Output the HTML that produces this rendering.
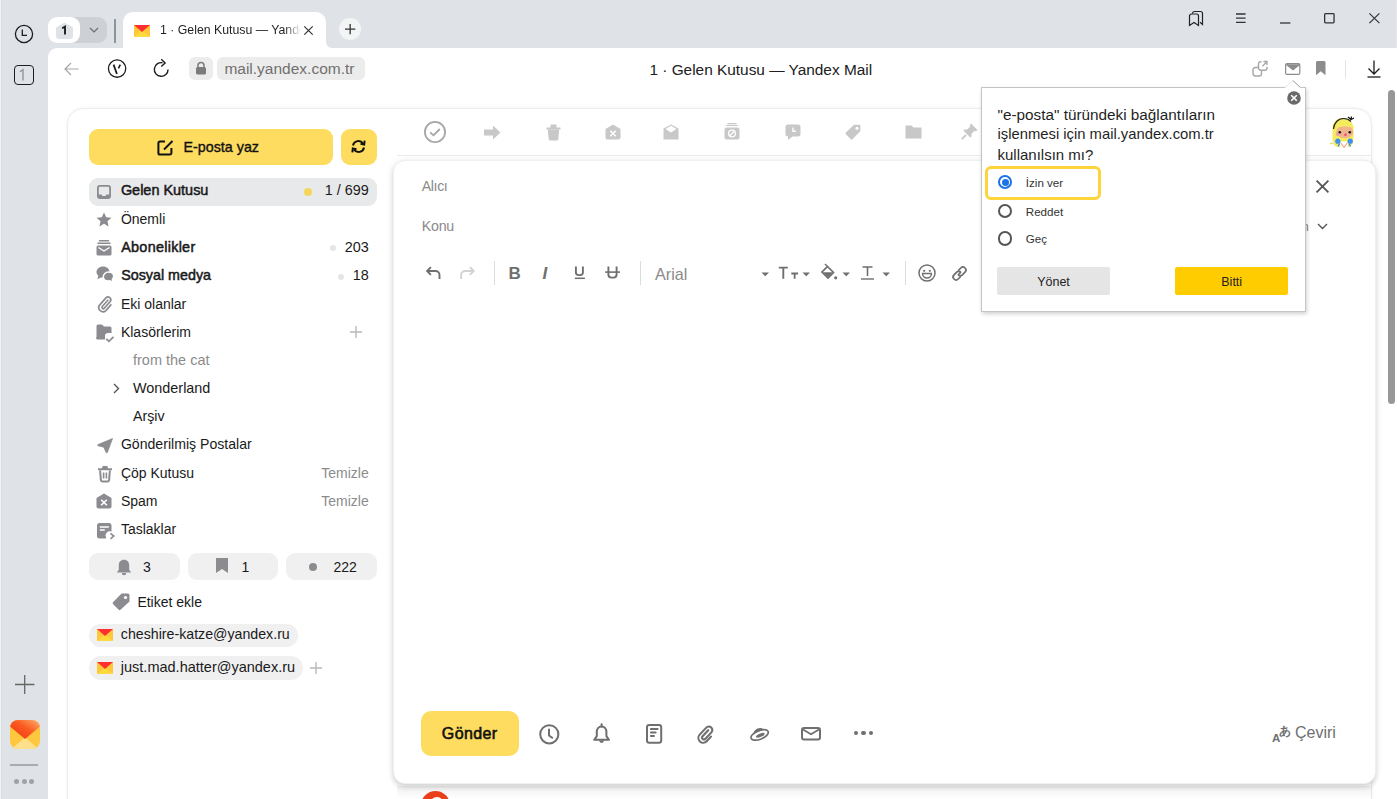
<!DOCTYPE html>
<html><head><meta charset="utf-8">
<style>
*{box-sizing:border-box;margin:0;padding:0}
html,body{width:1397px;height:799px;overflow:hidden;background:#dfe2e7;font-family:"Liberation Sans",sans-serif;color:#000;position:relative}
.a{position:absolute}
svg{position:absolute;overflow:visible}
.t{position:absolute;white-space:nowrap;line-height:1}
</style></head><body>
<div class="a" style="left:0px;top:0px;width:1px;height:799px;background:#f1f3f6;border-radius:0px;"></div>
<div class="a" style="left:1px;top:0px;width:1px;height:799px;background:#d9dce1;border-radius:0px;"></div>
<div class="a" style="left:1396px;top:0px;width:1px;height:48px;background:#e6e8ec;border-radius:0px;"></div>
<svg style="left:14px;top:24px;" width="20" height="20" viewBox="0 0 20 20"><circle cx="10" cy="10" r="8.6" fill="none" stroke="#1d1d1f" stroke-width="1.3"/><path d="M8.3 5.6V11.3H13" fill="none" stroke="#1d1d1f" stroke-width="1.3"/></svg>
<div class="a" style="left:14px;top:65px;width:20px;height:20px;background:transparent;border-radius:4px;border:1.3px solid #1d1d1f"></div>
<svg style="left:18px;top:69px;" width="8" height="12" viewBox="0 0 8 12"><path d="M2 2.8L5 0.8V11.5" fill="none" stroke="#8f8f8f" stroke-width="1.3"/></svg>
<div class="a" style="left:48px;top:17px;width:59px;height:26px;background:#cdd0d5;border-radius:9px;"></div>
<div class="a" style="left:48px;top:17px;width:32px;height:26px;background:#fff;border-radius:9px;"></div>
<svg style="left:56px;top:22px;" width="17" height="17" viewBox="0 0 17 17"><path d="M0 5.5L8.5 0.5L17 5.5V14a3 3 0 0 1-3 3H3a3 3 0 0 1-3-3z" fill="#dfe2e7"/></svg>
<svg style="left:60.5px;top:26px;" width="8" height="10" viewBox="0 0 8 10"><path d="M1.2 2.2L4 0.6V8.4" fill="none" stroke="#1d1d1f" stroke-width="1.9"/></svg>
<svg style="left:89px;top:26px;" width="10" height="8" viewBox="0 0 10 8"><path d="M1 2L5 6L9 2" fill="none" stroke="#6b6e73" stroke-width="1.2"/></svg>
<div class="a" style="left:114.2px;top:18.5px;width:1.6px;height:24.3px;background:#909398;border-radius:0px;"></div>
<div class="a" style="left:123px;top:12px;width:203px;height:40px;background:#fff;border-radius:10px 10px 0 0"></div>
<svg style="left:326px;top:42px;" width="6" height="6" viewBox="0 0 6 6"><path d="M0 0V6H6A6 6 0 0 1 0 0z" fill="#fff"/></svg>
<svg style="left:134.2px;top:24.9px;" width="16" height="11.7" viewBox="0 0 16 11.7"><path d="M0 0H16V11.7H0z" fill="#fdc93a"/><path d="M0 11.7L8 5.5L16 11.7z" fill="#ffd83a"/><path d="M0 0H16L8 7z" fill="#ff2f2f"/></svg>
<div class="t" style="left:160px;top:24.4px;font-size:12.3px;color:#1f1f1f;width:141px;overflow:hidden;-webkit-mask-image:linear-gradient(90deg,#000 88%,transparent 100%)">1 · Gelen Kutusu — Yandex Mail</div>
<svg style="left:304px;top:26px;" width="9" height="9" viewBox="0 0 9 9"><path d="M0.3 0.3L8.7 8.7M8.7 0.3L0.3 8.7" stroke="#333" stroke-width="1.2"/></svg>
<div class="a" style="left:338.8px;top:18.3px;width:22px;height:22px;border-radius:50%;background:#f3f4f6"></div>
<svg style="left:344.8px;top:24.3px;" width="10.3" height="10.3" viewBox="0 0 10.3 10.3"><path d="M5.15 0V10.3M0 5.15H10.3" stroke="#333" stroke-width="1.3"/></svg>
<svg style="left:1188px;top:10px;" width="16" height="16" viewBox="0 0 16 16"><path d="M4.5 3.5a2 2 0 0 1 2-2h6a2 2 0 0 1 2 2v11l-2.5-2.2" fill="none" stroke="#222" stroke-width="1.2"/><path d="M1.5 6a2 2 0 0 1 2-2h5a2 2 0 0 1 2 2v9.5L6 12.5 1.5 15.5z" fill="none" stroke="#222" stroke-width="1.2"/></svg>
<svg style="left:1236px;top:13px;" width="10" height="10" viewBox="0 0 10 10"><path d="M0 1H9.6M0 5.2H9.6M0 9.4H9.6" stroke="#333" stroke-width="1.3"/></svg>
<svg style="left:1280.2px;top:21.5px;" width="11" height="2" viewBox="0 0 11 2"><path d="M0 1H10.4" stroke="#333" stroke-width="1.3"/></svg>
<svg style="left:1324.1px;top:12.8px;" width="11" height="11" viewBox="0 0 11 11"><rect x="0.65" y="0.65" width="9.4" height="9.2" rx="0.8" fill="none" stroke="#333" stroke-width="1.3"/></svg>
<svg style="left:1368.7px;top:12.8px;" width="11" height="11" viewBox="0 0 11 11"><path d="M0.4 0.4L10.4 10.1M10.4 0.4L0.4 10.1" stroke="#333" stroke-width="1.2"/></svg>
<div class="a" style="left:48px;top:48px;width:1349px;height:751px;background:#fff;border-radius:9px 0 0 0"></div>
<svg style="left:64px;top:62px;" width="15" height="14" viewBox="0 0 15 14"><path d="M14.5 7H1.2M7 1L1 7L7 13" fill="none" stroke="#a6a6a6" stroke-width="1.2"/></svg>
<svg style="left:107px;top:59px;" width="20" height="20" viewBox="0 0 20 20"><circle cx="10.1" cy="9.6" r="8.65" fill="none" stroke="#1d1d1f" stroke-width="1.3"/><path d="M6.6 5.6L9.9 15" fill="none" stroke="#1d1d1f" stroke-width="1.8"/><path d="M13.3 5.6L11.4 9.3" fill="none" stroke="#1d1d1f" stroke-width="1.6"/></svg>
<svg style="left:152px;top:60px;" width="18" height="18" viewBox="0 0 18 18"><path d="M10.5 2.75A6.85 6.85 0 1 0 16.05 9.5" fill="none" stroke="#1d1d1f" stroke-width="1.4"/><path d="M9.3 -0.8L13.1 2.9L9.3 6.4" fill="none" stroke="#1d1d1f" stroke-width="1.4"/></svg>
<div class="a" style="left:189px;top:56.5px;width:24px;height:23.5px;background:#ececec;border-radius:6px;"></div>
<svg style="left:195px;top:61px;" width="12" height="14" viewBox="0 0 12 14"><path d="M3 6.5V4.5a3 3 0 0 1 6 0v2" fill="none" stroke="#7b7b7b" stroke-width="1.5"/><rect x="1" y="6" width="10" height="7.5" rx="1.5" fill="#7b7b7b"/></svg>
<div class="a" style="left:216.5px;top:56.5px;width:148px;height:23.5px;background:#ececec;border-radius:6px;"></div>
<div class="t" style="left:224.4px;top:61.38px;font-size:15.5px;color:#707070;">mail.yandex.com.tr</div>
<div class="t" style="left:649.4px;top:61.76px;font-size:15.4px;color:#202020;">1 · Gelen Kutusu — Yandex Mail</div>
<svg style="left:1252px;top:60px;" width="16" height="16" viewBox="0 0 16 16"><path d="M6 7.5H3.2A2.2 2.2 0 0 0 1 9.7v4.1A2.2 2.2 0 0 0 3.2 16h4.1a2.2 2.2 0 0 0 2.2-2.2V10" fill="none" stroke="#a6a6a6" stroke-width="1.4"/><path d="M9.5 1.7H8.7A2.2 2.2 0 0 0 6.5 3.9v4.1a2.2 2.2 0 0 0 2.2 2.2h4.1A2.2 2.2 0 0 0 15 8V6.8" fill="none" stroke="#a6a6a6" stroke-width="1.4"/><path d="M10.5 6.2L14.8 1.7M11.5 1.5H15V5" fill="none" stroke="#a6a6a6" stroke-width="1.3"/></svg>
<svg style="left:1284.5px;top:62.5px;" width="16" height="12" viewBox="0 0 16 12"><rect x="0.6" y="0.6" width="14.2" height="10.8" rx="1.5" fill="none" stroke="#8c8c8c" stroke-width="1.2"/><path d="M1.2 1.2L8 6.6L14.8 1.2z" fill="#8c8c8c"/><path d="M1.2 1.2L8 6.6L14.8 1.2" fill="none" stroke="#8c8c8c" stroke-width="1.4"/></svg>
<svg style="left:1315.8px;top:61px;" width="9.5" height="14.3" viewBox="0 0 9.5 14.3"><path d="M0 1.5A1.5 1.5 0 0 1 1.5 0H8A1.5 1.5 0 0 1 9.5 1.5V14.3L4.75 10.3L0 14.3z" fill="#8c8c8c"/></svg>
<div class="a" style="left:1344.5px;top:60px;width:1px;height:18px;background:#e5e5e5;border-radius:0px;"></div>
<svg style="left:1366px;top:60px;" width="16" height="18" viewBox="0 0 16 18"><path d="M8 0.5V14M2.5 8.5L8 14L13.5 8.5" fill="none" stroke="#1d1d1f" stroke-width="1.3"/><path d="M1.5 17H14.5" stroke="#1d1d1f" stroke-width="1.3"/></svg>
<div class="a" style="left:1387.5px;top:90px;width:7.7px;height:314px;background:#979797;border-radius:4px;"></div>
<div class="a" style="left:67px;top:108px;width:1305px;height:720px;border:1px solid #ececec;border-radius:16px;box-shadow:0 0 3px rgba(0,0,0,0.06)"></div>
<div class="a" style="left:88.5px;top:129px;width:244px;height:36px;background:#fddc60;border-radius:9px;"></div>
<svg style="left:157px;top:139px;" width="18" height="17" viewBox="0 0 18 17"><path d="M8 2.5H3a1.6 1.6 0 0 0-1.6 1.6V14a1.6 1.6 0 0 0 1.6 1.6h9.8A1.6 1.6 0 0 0 14.4 14V9" fill="none" stroke="#111" stroke-width="2"/><path d="M7 10.5L15.5 2" fill="none" stroke="#111" stroke-width="2"/></svg>
<div class="t" style="left:183.5px;top:140.20px;font-size:14.3px;color:#111;-webkit-text-stroke:0.35px #111">E-posta yaz</div>
<div class="a" style="left:341px;top:129px;width:36px;height:36px;background:#fddc60;border-radius:9px;"></div>
<svg style="left:350px;top:138px;" width="17" height="17" viewBox="0 0 17 17"><path d="M3 7.5A5.5 5.5 0 0 1 13 5.5M14 9.5A5.5 5.5 0 0 1 4 11.5" fill="none" stroke="#111" stroke-width="2"/><path d="M10.5 5.8L14.2 6.5L14.6 2.6M6.5 11.2L2.8 10.5L2.4 14.4" fill="none" stroke="#111" stroke-width="2"/></svg>
<div class="a" style="left:88.5px;top:177.5px;width:288.5px;height:28px;background:#e8e9eb;border-radius:9px;"></div>
<svg style="left:97px;top:185px;" width="14" height="14" viewBox="0 0 14 14"><rect x="0.9" y="0.9" width="12.2" height="12.2" rx="2" fill="none" stroke="#8c8c90" stroke-width="1.8"/><path d="M1 9.5H4.5L5.5 11H8.5L9.5 9.5H13V13H1z" fill="#8c8c90"/></svg>
<div class="t" style="left:120.9px;top:183.37px;font-size:14.45px;color:#1a1a1a;-webkit-text-stroke:0.5px #1a1a1a">Gelen Kutusu</div>
<div class="a" style="left:303.8px;top:187.8px;width:8px;height:8px;border-radius:50%;background:#f6d65a"></div>
<div class="t" style="right:1028.3px;top:183.41px;font-size:14.4px;color:#1a1a1a;">1 / 699</div>
<svg style="left:96px;top:212px;" width="16" height="15" viewBox="0 0 16 15"><path d="M8 0.5L10.2 5.3L15.4 5.8L11.5 9.3L12.6 14.4L8 11.8L3.4 14.4L4.5 9.3L0.6 5.8L5.8 5.3z" fill="#8c8c90"/></svg>
<div class="t" style="left:120.9px;top:211.95px;font-size:14px;color:#1a1a1a;">Önemli</div>
<svg style="left:96px;top:240px;" width="16" height="16" viewBox="0 0 16 16"><path d="M3.5 0.8H12.5M2 3.3H14" stroke="#8c8c90" stroke-width="1.5" stroke-linecap="round"/><path d="M0.5 7A1.5 1.5 0 0 1 2 5.5H14A1.5 1.5 0 0 1 15.5 7V14a1.5 1.5 0 0 1-1.5 1.5H2A1.5 1.5 0 0 1 0.5 14z" fill="#8c8c90"/><path d="M2.5 7.5L8 11L13.5 7.5" fill="none" stroke="#fff" stroke-width="1.3"/></svg>
<div class="t" style="left:121.2px;top:240.11px;font-size:14.4px;color:#1a1a1a;-webkit-text-stroke:0.5px #1a1a1a;letter-spacing:0.28px">Abonelikler</div>
<div class="a" style="left:330.4px;top:245px;width:6px;height:6px;border-radius:50%;background:#e6e6e8"></div>
<div class="t" style="right:1028.3px;top:239.81px;font-size:14.4px;color:#1a1a1a;">203</div>
<svg style="left:96px;top:266px;" width="19" height="18" viewBox="0 0 19 18"><path d="M7 0.5C3.3 0.5 0.5 3 0.5 6c0 1.5.7 2.8 1.8 3.8L1.4 13.3 5 11.4c.6.1 1.3.2 2 .2 3.7 0 6.5-2.5 6.5-5.6S10.7.5 7 .5z" fill="#8c8c90"/><path d="M12.5 6c2.9 0 5.2 1.9 5.2 4.3 0 1.1-.5 2.1-1.3 2.9l.6 3.2-3-1.6c-.5.1-1 .2-1.5.2-2.9 0-5.2-1.9-5.2-4.3S9.6 6 12.5 6z" fill="#8c8c90" stroke="#fff" stroke-width="1.5"/></svg>
<div class="t" style="left:121.2px;top:268.40px;font-size:14.3px;color:#1a1a1a;-webkit-text-stroke:0.5px #1a1a1a">Sosyal medya</div>
<div class="a" style="left:337.8px;top:273.5px;width:6px;height:6px;border-radius:50%;background:#e6e6e8"></div>
<div class="t" style="right:1028.3px;top:268.01px;font-size:14.4px;color:#1a1a1a;">18</div>
<svg style="left:97px;top:294.5px;" width="16" height="18" viewBox="0 0 16 18"><path d="M10.8 5.2L5.3 11.5a1.3 1.3 0 0 0 2 1.7l5.8-6.6a2.8 2.8 0 0 0-4.2-3.7L2.6 10.1a4.2 4.2 0 0 0 6.3 5.5l5-5.7" fill="none" stroke="#8c8c90" stroke-width="1.7" stroke-linecap="round"/></svg>
<div class="t" style="left:120.9px;top:296.55px;font-size:14px;color:#1a1a1a;">Eki olanlar</div>
<svg style="left:96px;top:324px;" width="21" height="21" viewBox="0 0 21 21"><path d="M0.5 2a1.5 1.5 0 0 1 1.5-1.5h4l2 2h6a1.5 1.5 0 0 1 1.5 1.5v5h-3.5a3 3 0 0 0-3 3v3.5H2A1.5 1.5 0 0 1 .5 13z" fill="#8c8c90"/><path d="M10.3 14.8l2.6 2.6 4.6-4.6" fill="none" stroke="#8c8c90" stroke-width="1.7"/></svg>
<div class="t" style="left:120.9px;top:324.75px;font-size:14px;color:#1a1a1a;">Klasörlerim</div>
<svg style="left:350px;top:326px;" width="12" height="12" viewBox="0 0 12 12"><path d="M6 0V12M0 6H12" stroke="#b8b8b8" stroke-width="1.4"/></svg>
<div class="t" style="left:133px;top:352.53px;font-size:14.5px;color:#8c8c8c;">from the cat</div>
<svg style="left:113px;top:383px;" width="7" height="11" viewBox="0 0 7 11"><path d="M1 1L5.5 5.5L1 10" fill="none" stroke="#555" stroke-width="1.4"/></svg>
<div class="t" style="left:133px;top:380.81px;font-size:14.4px;color:#1a1a1a;">Wonderland</div>
<div class="t" style="left:133px;top:409.18px;font-size:14.2px;color:#1a1a1a;">Arşiv</div>
<svg style="left:96.5px;top:438px;" width="16" height="16" viewBox="0 0 16 16"><path d="M15.5 0.6L1 6.6a.6.6 0 0 0 0 1.1L6.8 9.2 9.2 14.6a.6.6 0 0 0 1.1-.1z" fill="#8c8c90" stroke="#8c8c90" stroke-width="0.8" stroke-linejoin="round"/></svg>
<div class="t" style="left:120.9px;top:437.46px;font-size:14.1px;color:#1a1a1a;">Gönderilmiş Postalar</div>
<svg style="left:97.8px;top:466px;" width="14" height="16" viewBox="0 0 14 16"><path d="M0 2.2H14V4.2H0zM4.2 2.5V1A1 1 0 0 1 5.2 0H8.8A1 1 0 0 1 9.8 1V2.5" fill="#8c8c90"/><path d="M2.1 4.5l.8 9.6A1.7 1.7 0 0 0 4.6 15.5h4.8a1.7 1.7 0 0 0 1.7-1.4l.8-9.6" fill="none" stroke="#8c8c90" stroke-width="2"/><path d="M5.6 6.5V12.5M8.4 6.5V12.5" stroke="#8c8c90" stroke-width="1.6"/></svg>
<div class="t" style="left:120.9px;top:465.75px;font-size:14px;color:#1a1a1a;">Çöp Kutusu</div>
<div class="t" style="right:1028.3px;top:465.75px;font-size:14px;color:#8c8c8c;">Temizle</div>
<svg style="left:96px;top:493px;" width="16" height="16" viewBox="0 0 16 16"><path d="M8 0.5L15.5 5V13.5a2 2 0 0 1-2 2h-11a2 2 0 0 1-2-2V5z" fill="#8c8c90"/><path d="M5.2 6.7L10.8 12.3M10.8 6.7L5.2 12.3" stroke="#fff" stroke-width="1.6"/></svg>
<div class="t" style="left:120.9px;top:493.95px;font-size:14px;color:#1a1a1a;">Spam</div>
<div class="t" style="right:1028.3px;top:493.95px;font-size:14px;color:#8c8c8c;">Temizle</div>
<svg style="left:97px;top:523px;" width="19" height="16" viewBox="0 0 19 16"><path d="M0 2.5A2.5 2.5 0 0 1 2.5 0h9.5A2.5 2.5 0 0 1 14.5 2.5V8.6A4.2 4.2 0 0 0 9 14.2V15.5H2.5A2.5 2.5 0 0 1 0 13z" fill="#8c8c90"/><path d="M2.8 4h9M2.8 7h5" stroke="#fff" stroke-width="1.5"/><path d="M13.5 10.3l3.3 2.8-3.3 2.8" fill="none" stroke="#8c8c90" stroke-width="1.6"/></svg>
<div class="t" style="left:120.9px;top:522.15px;font-size:14px;color:#1a1a1a;">Taslaklar</div>
<div class="a" style="left:88.5px;top:552.8px;width:91px;height:27.6px;background:#f0f0f1;border-radius:9px;"></div>
<div class="a" style="left:187.8px;top:552.8px;width:90px;height:27.6px;background:#f0f0f1;border-radius:9px;"></div>
<div class="a" style="left:286.2px;top:552.8px;width:90.8px;height:27.6px;background:#f0f0f1;border-radius:9px;"></div>
<svg style="left:116px;top:558.5px;" width="16" height="17" viewBox="0 0 16 17"><path d="M8 0.8c-3.2 0-5.2 2.4-5.2 5.4v4.5L.8 13.5H15.2L13.2 10.7V6.2C13.2 3.2 11.2.8 8 .8z" fill="#8c8c90"/><path d="M5.8 14a2.2 2.2 0 0 0 4.4 0z" fill="#8c8c90"/></svg>
<div class="t" style="left:143px;top:559.65px;font-size:14px;color:#1a1a1a;">3</div>
<svg style="left:216px;top:558px;" width="12" height="15" viewBox="0 0 12 15"><path d="M0 0H12V15L6 11L0 15z" fill="#8c8c90"/></svg>
<div class="t" style="left:241.5px;top:559.65px;font-size:14px;color:#1a1a1a;">1</div>
<div class="a" style="left:309px;top:562.5px;width:8px;height:8px;border-radius:50%;background:#8c8c90"></div>
<div class="t" style="left:333.5px;top:559.65px;font-size:14px;color:#1a1a1a;">222</div>
<svg style="left:112px;top:593px;" width="18" height="17" viewBox="0 0 18 17"><path d="M9.5 0.5h6.5a1.5 1.5 0 0 1 1.5 1.5v6.5L8.5 16.8a1.3 1.3 0 0 1-1.8 0L1 11a1.3 1.3 0 0 1 0-1.8z" fill="#8c8c90"/><circle cx="13.5" cy="4.5" r="1.6" fill="#fff"/></svg>
<div class="t" style="left:137.4px;top:595.35px;font-size:14px;color:#1a1a1a;">Etiket ekle</div>
<div class="a" style="left:88.8px;top:623.5px;width:209px;height:23.8px;background:#f0f0f1;border-radius:12px;"></div>
<svg style="left:96.5px;top:629.3px;" width="16" height="11.7" viewBox="0 0 16 11.7"><path d="M0 0H16V11.7H0z" fill="#fdc93a"/><path d="M0 11.7L8 5.5L16 11.7z" fill="#ffd83a"/><path d="M0 0H16L8 7z" fill="#ff2f2f"/></svg>
<div class="t" style="left:120.8px;top:626.98px;font-size:14.2px;color:#1a1a1a;">cheshire-katze@yandex.ru</div>
<div class="a" style="left:88.8px;top:655.9px;width:214.2px;height:23.8px;background:#f0f0f1;border-radius:12px;"></div>
<svg style="left:96.5px;top:661.6px;" width="16" height="11.7" viewBox="0 0 16 11.7"><path d="M0 0H16V11.7H0z" fill="#fdc93a"/><path d="M0 11.7L8 5.5L16 11.7z" fill="#ffd83a"/><path d="M0 0H16L8 7z" fill="#ff2f2f"/></svg>
<div class="t" style="left:120.8px;top:659.93px;font-size:14.5px;color:#1a1a1a;">just.mad.hatter@yandex.ru</div>
<svg style="left:309.5px;top:661.5px;" width="12" height="12" viewBox="0 0 12 12"><path d="M6 0V12M0 6H12" stroke="#b8b8b8" stroke-width="1.4"/></svg>
<svg style="left:15px;top:675px;" width="19.4" height="19" viewBox="0 0 19.4 19"><path d="M9.7 0V19M0 9.5H19.4" stroke="#666" stroke-width="1.3"/></svg>
<div class="a" style="left:10px;top:719.5px;width:30px;height:29.5px;border-radius:8px;overflow:hidden;background:#fdc83e"><svg style="left:0;top:0" width="30" height="30"><defs><linearGradient id="g1" x1="0" y1="1" x2="1" y2="0"><stop offset="0" stop-color="#f0301a"/><stop offset="0.55" stop-color="#fa5a1e"/><stop offset="1" stop-color="#ffb070"/></linearGradient></defs><path d="M0 30L15 17.5L30 30z" fill="#fee08c"/><path d="M0 0H30V6.5L15 19L0 6.5z" fill="url(#g1)"/></svg></div>
<div class="a" style="left:10px;top:764px;width:28px;height:1.5px;background:#a9abaf;border-radius:0px;"></div>
<div class="a" style="left:14.0px;top:778.8px;width:5px;height:5px;border-radius:50%;background:#a0a2a6"></div>
<div class="a" style="left:21.5px;top:778.8px;width:5px;height:5px;border-radius:50%;background:#a0a2a6"></div>
<div class="a" style="left:29.0px;top:778.8px;width:5px;height:5px;border-radius:50%;background:#a0a2a6"></div>
<svg style="left:424px;top:121.3px;" width="22" height="22" viewBox="0 0 22 22"><circle cx="11" cy="11" r="10.1" fill="none" stroke="#a6a6a6" stroke-width="1.8"/><path d="M6.2 11.3L9.5 14.3L15.8 8" fill="none" stroke="#a6a6a6" stroke-width="1.8"/></svg>
<svg style="left:484px;top:125px;" width="17" height="15" viewBox="0 0 17 15"><path d="M0 4.5H9V0.5L16.5 7.5L9 14.5V10.5H0z" fill="#c8c8c8"/></svg>
<svg style="left:545.5px;top:124px;" width="15" height="17" viewBox="0 0 15 17"><path d="M0.5 3.5H14.5V5.5H0.5zM4.5 3.5V1.2a.8.8 0 0 1 .8-.8h4.4a.8.8 0 0 1 .8.8V3.5" fill="#c8c8c8"/><path d="M1.8 5.5H13.2L12.3 15a1.6 1.6 0 0 1-1.6 1.5H4.3A1.6 1.6 0 0 1 2.7 15z" fill="#c8c8c8"/></svg>
<svg style="left:605px;top:124px;" width="16" height="16" viewBox="0 0 16 16"><path d="M8 0.5L15.5 5V13.5a2 2 0 0 1-2 2h-11a2 2 0 0 1-2-2V5z" fill="#c8c8c8"/><path d="M5.3 6.8L10.7 12.2M10.7 6.8L5.3 12.2" stroke="#fff" stroke-width="1.6"/></svg>
<svg style="left:663px;top:124px;" width="16" height="16" viewBox="0 0 16 16"><path d="M8 0.5L15.5 4.5V15.5H0.5V4.5z" fill="#c8c8c8"/><path d="M2.5 5L8 1.8L13.5 5L8 8.5z" fill="#fff"/></svg>
<svg style="left:723.5px;top:123px;" width="16" height="17" viewBox="0 0 16 17"><path d="M3.5 .7H12.5M2.2 2.5H13.8" stroke="#c8c8c8" stroke-width="1.2"/><rect x="0.5" y="4.5" width="15" height="12" rx="2.5" fill="#c8c8c8"/><circle cx="8" cy="10.5" r="3.4" fill="none" stroke="#fff" stroke-width="1.3"/><path d="M5.8 12.8L10.2 8.2" stroke="#fff" stroke-width="1.3"/></svg>
<svg style="left:785px;top:124px;" width="16" height="17" viewBox="0 0 16 17"><path d="M3 0.5H13a2.5 2.5 0 0 1 2.5 2.5v7a2.5 2.5 0 0 1-2.5 2.5H7.5L3 16V12.5A2.5 2.5 0 0 1 .5 10V3A2.5 2.5 0 0 1 3 .5z" fill="#c8c8c8"/><path d="M8 3.5V7.2H10.8" fill="none" stroke="#fff" stroke-width="1.4"/></svg>
<svg style="left:845px;top:124px;" width="16" height="17" viewBox="0 0 16 17"><path d="M9 0.8H14.2a1.2 1.2 0 0 1 1.2 1.2V7L7.5 15.2a1.2 1.2 0 0 1-1.7 0L.9 10.3a1.2 1.2 0 0 1 0-1.7z" fill="#c8c8c8"/><circle cx="12" cy="4.3" r="1.5" fill="#fff"/></svg>
<svg style="left:905px;top:125px;" width="17" height="14" viewBox="0 0 17 14"><path d="M0.5 0.5H6.5L8.5 2.5H16.5V13.5H0.5z" fill="#c8c8c8"/></svg>
<svg style="left:961px;top:123px;" width="17" height="17" viewBox="0 0 17 17"><path d="M10 .5L16.5 7 14.8 8.2 13.5 7.8 10.5 10.8 10.5 13.5 9.3 14.5 2.5 7.7 3.5 6.5H6.2L9.2 3.5 8.8 2.2z" fill="#c8c8c8"/><path d="M5 12L.8 16.2" stroke="#c8c8c8" stroke-width="1.8"/></svg>
<div class="a" style="left:397px;top:155px;width:974px;height:1.2px;background:#ececec;border-radius:0px;"></div>
<div class="a" style="left:392.5px;top:160px;width:983.5px;height:624px;background:#fff;border-radius:12px;border:1px solid #efefef;box-shadow:0 3px 5px rgba(0,0,0,0.15),0 0 8px rgba(0,0,0,0.06)"></div>
<div class="t" style="left:421.8px;top:178.98px;font-size:14.2px;color:#8a8a8a;letter-spacing:-0.4px">Alıcı</div>
<div class="t" style="left:421.8px;top:219.28px;font-size:14.2px;color:#8a8a8a;letter-spacing:-0.25px">Konu</div>
<svg style="left:1315.5px;top:179.5px;" width="13" height="13" viewBox="0 0 13 13"><path d="M.6 .6L12.4 12.4M12.4 .6L.6 12.4" stroke="#555" stroke-width="1.8"/></svg>
<div class="t" style="left:1301.5px;top:220.03px;font-size:13.2px;color:#8a8a8a;">n</div>
<svg style="left:1317px;top:223px;" width="11" height="7" viewBox="0 0 11 7"><path d="M1 1L5.5 5.5L10 1" fill="none" stroke="#555" stroke-width="1.4"/></svg>
<svg style="left:426px;top:265.5px;" width="17" height="14" viewBox="0 0 17 14"><path d="M4.9 1.2L1.1 5L4.9 8.8" fill="none" stroke="#6f6f6f" stroke-width="1.9"/><path d="M1.5 5H9.5a4 4 0 0 1 4 4V13" fill="none" stroke="#6f6f6f" stroke-width="1.9"/></svg>
<svg style="left:458.5px;top:265.5px;" width="17" height="14" viewBox="0 0 17 14"><path d="M10.9 1.2L14.7 5L10.9 8.8" fill="none" stroke="#d3d3d3" stroke-width="1.9"/><path d="M14.3 5H6.1a4 4 0 0 0-4 4V13" fill="none" stroke="#d3d3d3" stroke-width="1.9"/></svg>
<div class="a" style="left:494px;top:261.4px;width:1.2px;height:23.5px;background:#dcdcdc;border-radius:0px;"></div>
<div class="t" style="left:508.5px;top:264.81px;font-size:17px;color:#6f6f6f;font-weight:700;">B</div>
<div class="t" style="left:542.5px;top:264.81px;font-size:17px;color:#6f6f6f;font-weight:700;font-style:italic">I</div>
<svg style="left:574px;top:266px;" width="12" height="14" viewBox="0 0 12 14"><path d="M1.9 0.6V6.3a2.8 2.8 0 0 0 2.8 2.8H6.1a2.8 2.8 0 0 0 2.8-2.8V0.6" fill="none" stroke="#6f6f6f" stroke-width="1.9"/><path d="M0.9 12.3H10.9" stroke="#6f6f6f" stroke-width="1.5"/></svg>
<svg style="left:604.5px;top:266px;" width="16" height="14" viewBox="0 0 16 14"><path d="M3.4 0.6V8.6a3 3 0 0 0 3 3H8.6a3 3 0 0 0 3-3V0.6" fill="none" stroke="#6f6f6f" stroke-width="1.9"/><path d="M0.2 6.1H15" stroke="#6f6f6f" stroke-width="1.6"/></svg>
<div class="a" style="left:640.2px;top:261.4px;width:1.2px;height:23.5px;background:#dcdcdc;border-radius:0px;"></div>
<div class="t" style="left:655px;top:265.99px;font-size:16.2px;color:#8a8a8a;">Arial</div>
<svg style="left:760.5px;top:271.8px;" width="10" height="5" viewBox="0 0 10 5"><path d="M0.5 0.5H8L4.25 4.2z" fill="#6f6f6f"/></svg>
<svg style="left:778px;top:266px;" width="21" height="14" viewBox="0 0 21 14"><path d="M0.8 1.6H9.8M5.3 0.7V12.8" stroke="#6f6f6f" stroke-width="1.9"/><path d="M13.3 7.5H20M16.65 6.6V12.8" stroke="#6f6f6f" stroke-width="1.8"/></svg>
<svg style="left:801.5px;top:271.8px;" width="10" height="5" viewBox="0 0 10 5"><path d="M0.5 0.5H8L4.25 4.2z" fill="#6f6f6f"/></svg>
<svg style="left:821px;top:265px;" width="17" height="15" viewBox="0 0 17 15"><path d="M6.5 1.5L12.5 7.5L7 13L1 7z" fill="none" stroke="#6f6f6f" stroke-width="1.7"/><path d="M2 7.2H12L7 12.3z" fill="#6f6f6f"/><path d="M6 1L4 -1" stroke="#6f6f6f" stroke-width="1.5"/><circle cx="14.7" cy="12.8" r="1.6" fill="#6f6f6f"/></svg>
<svg style="left:841.5px;top:271.8px;" width="10" height="5" viewBox="0 0 10 5"><path d="M0.5 0.5H8L4.25 4.2z" fill="#6f6f6f"/></svg>
<svg style="left:860.5px;top:266px;" width="13" height="14" viewBox="0 0 13 14"><path d="M1.5 1H11.5M6.5 1V10" stroke="#6f6f6f" stroke-width="1.6"/><path d="M0 13H13" stroke="#6f6f6f" stroke-width="1.4"/></svg>
<svg style="left:881.8px;top:271.8px;" width="10" height="5" viewBox="0 0 10 5"><path d="M0.5 0.5H8L4.25 4.2z" fill="#6f6f6f"/></svg>
<div class="a" style="left:905px;top:261.4px;width:1.2px;height:23.5px;background:#dcdcdc;border-radius:0px;"></div>
<svg style="left:917.5px;top:264px;" width="18" height="18" viewBox="0 0 18 18"><circle cx="9" cy="9" r="8" fill="none" stroke="#6f6f6f" stroke-width="1.5"/><circle cx="6.2" cy="6.8" r="1.1" fill="#6f6f6f"/><circle cx="11.8" cy="6.8" r="1.1" fill="#6f6f6f"/><path d="M4.5 9.5H13.5a4.5 4.5 0 0 1-9 0z" fill="none" stroke="#6f6f6f" stroke-width="1.4"/></svg>
<svg style="left:950.5px;top:264.5px;" width="17" height="17" viewBox="0 0 17 17"><path d="M7 10L10 7" stroke="#6f6f6f" stroke-width="1.7"/><path d="M7.2 5.6l2.6-2.6a2.9 2.9 0 0 1 4.2 4.2l-2.6 2.6a2.9 2.9 0 0 1-4.2 0M9.8 11.4l-2.6 2.6a2.9 2.9 0 0 1-4.2-4.2l2.6-2.6a2.9 2.9 0 0 1 4.2 0" fill="none" stroke="#6f6f6f" stroke-width="1.7"/></svg>
<div class="a" style="left:421px;top:711px;width:98px;height:45px;background:#fddc60;border-radius:10px;"></div>
<div class="t" style="left:441.8px;top:726.06px;font-size:16px;color:#111;-webkit-text-stroke:0.6px #111;letter-spacing:0.4px">Gönder</div>
<svg style="left:538.5px;top:723.5px;" width="21" height="21" viewBox="0 0 21 21"><circle cx="10.3" cy="10.3" r="9.1" fill="none" stroke="#6f6f6f" stroke-width="2"/><path d="M10 5.5V11.5L13.2 13.8" fill="none" stroke="#6f6f6f" stroke-width="2" stroke-linecap="round" stroke-linejoin="round"/></svg>
<svg style="left:592.5px;top:723.5px;" width="18" height="21" viewBox="0 0 18 21"><path d="M8.6 2.5c-3 0-4.8 2.5-4.8 5.5v4.2L1.2 15.8H16L13.4 12.2V8c0-3-1.8-5.5-4.8-5.5z" fill="none" stroke="#6f6f6f" stroke-width="2" stroke-linejoin="round"/><path d="M8.6 0.3V2.5" stroke="#6f6f6f" stroke-width="2" stroke-linecap="round"/><path d="M6.2 16.5a2.4 2.4 0 0 0 4.8 0z" fill="#6f6f6f"/></svg>
<svg style="left:645.5px;top:723.8px;" width="17" height="20" viewBox="0 0 17 20"><rect x="1" y="1" width="14.2" height="17.8" rx="2.2" fill="none" stroke="#6f6f6f" stroke-width="2"/><path d="M4.8 5H11.7M4.8 8.5H9.7M4.8 12H8" stroke="#6f6f6f" stroke-width="1.8" stroke-linecap="round"/></svg>
<svg style="left:697px;top:723.8px;" width="17" height="19" viewBox="0 0 17 19"><path d="M11.2 6.2L5.6 12.2a1.9 1.9 0 0 0 2.8 2.6l6-6.4a3.5 3.5 0 0 0-5.1-4.8L2.7 10.6a4.8 4.8 0 0 0 7 6.6l4.3-4.6" fill="none" stroke="#6f6f6f" stroke-width="2.1" stroke-linecap="round"/></svg>
<svg style="left:748.5px;top:727px;" width="21" height="14" viewBox="0 0 21 14"><g transform="rotate(-22 10.3 7)"><ellipse cx="10.3" cy="8" rx="9.2" ry="4.3" fill="none" stroke="#6f6f6f" stroke-width="1.7"/><path d="M4.5 5.5C5.5 2.5 8 1.2 10.8 1.2S15.5 2.5 16.3 5.2C13.5 4.5 7.5 4.5 4.5 5.5z" fill="#6f6f6f"/><ellipse cx="10.8" cy="8.6" rx="4.6" ry="1.7" fill="#6f6f6f"/></g></svg>
<svg style="left:801.3px;top:726.6px;" width="20" height="14" viewBox="0 0 20 14"><rect x="1" y="1" width="18" height="11.6" rx="2" fill="none" stroke="#6f6f6f" stroke-width="2"/><path d="M2 2.5L10 7.2L18 2.5" fill="none" stroke="#6f6f6f" stroke-width="1.8"/></svg>
<div class="a" style="left:854.3px;top:731px;width:4.2px;height:4.2px;border-radius:50%;background:#6f6f6f"></div>
<div class="a" style="left:861.4px;top:731px;width:4.2px;height:4.2px;border-radius:50%;background:#6f6f6f"></div>
<div class="a" style="left:868.5px;top:731px;width:4.2px;height:4.2px;border-radius:50%;background:#6f6f6f"></div>
<div class="t" style="left:1272px;top:733.27px;font-size:11.5px;color:#6f6f6f;font-weight:700;">A</div>
<div class="t" style="left:1279.3px;top:725.14px;font-size:12px;color:#6f6f6f;font-weight:700;">あ</div>
<div class="t" style="left:1295px;top:724.76px;font-size:16px;color:#6f6f6f;">Çeviri</div>
<div class="a" style="left:397px;top:786px;width:975px;height:13px;background:linear-gradient(rgba(0,0,0,0.06),rgba(0,0,0,0.0))"></div>
<div class="a" style="left:421px;top:791px;width:29px;height:29px;border-radius:50%;background:#ea3f1b"></div>
<div class="a" style="left:430px;top:796.5px;width:14px;height:8px;border-radius:8px 8px 0 0;border-top:3px solid #fff;border-left:3px solid #fff"></div>
<svg style="left:1331px;top:116px;" width="25" height="33" viewBox="0 0 25 33"><path d="M12 2C5 2 1.5 7 1.5 13c0 6-.5 11 1 15 1 2 3 3 5 3h9c2 0 4-1 5-3 1.5-4 1-9 1-15C22.5 7 19 2 12 2z" fill="#f4ec5e"/><path d="M-1 28c1-1 2-1 3 0" fill="none" stroke="#e8de7a" stroke-width="1.5"/><ellipse cx="13.8" cy="15.8" rx="8.6" ry="6.4" fill="#f0b38d"/><path d="M4 12c2-4 6-6 10-6s7 2 9 6c-3-1-7-1.5-10-1.5S7 11 4 12z" fill="#f4ec5e"/><path d="M2.5 13c.5-6 4.5-10.5 10-10.5 3 0 5.5 1 7.5 3" fill="none" stroke="#222" stroke-width="1.2"/><path d="M17 1l3 2.5 3-1.5M20 3.5l.5-3" fill="none" stroke="#111" stroke-width="1.3"/><circle cx="8.8" cy="16.3" r="1.3" fill="#111"/><circle cx="18.8" cy="16.3" r="1.3" fill="#111"/><circle cx="6.5" cy="18.3" r="1.6" fill="#f39aa8"/><circle cx="14.5" cy="18.8" r="1.2" fill="#e8407a"/><path d="M8 25.5h10l-2 6h-6z" fill="#fff"/><path d="M9.5 26.5l3.5 5 3.5-5" fill="none" stroke="#f08060" stroke-width="0.9"/><circle cx="6.8" cy="25.2" r="2.6" fill="#3d8ff0"/><circle cx="19.2" cy="25.2" r="2.6" fill="#3d8ff0"/><path d="M7 30.5l1.5-3M19.5 30.5l-1.5-3" stroke="#3d8ff0" stroke-width="1.4"/></svg>
<div class="a" style="left:980.5px;top:86.5px;width:325px;height:225px;background:#fff;border:1px solid #c4c4c4;box-shadow:1px 2px 4px rgba(0,0,0,0.18)"></div>
<svg style="left:1284px;top:79.5px;" width="18" height="8" viewBox="0 0 18 8"><path d="M1.2 7.2L8.8 0.5L16.2 7.2V9.2H1.2z" fill="#fff"/><path d="M1.5 7.2L8.8 0.5" stroke="#e6e6e6" stroke-width="1"/><path d="M8.8 0.5L16 7.2" stroke="#9a9a9a" stroke-width="1"/></svg>
<svg style="left:1285.5px;top:89.8px;" width="16" height="16" viewBox="0 0 16 16"><circle cx="8" cy="8" r="6.8" fill="#6a6a6a"/><path d="M5.2 5.2L10.8 10.8M10.8 5.2L5.2 10.8" stroke="#fff" stroke-width="1.6"/></svg>
<div class="t" style="left:997.5px;top:106.85px;font-size:15.3px;color:#1f1f1f;">"e-posta" türündeki bağlantıların</div>
<div class="t" style="left:997.5px;top:127.27px;font-size:14.8px;color:#1f1f1f;">işlenmesi için mail.yandex.com.tr</div>
<div class="t" style="left:997.5px;top:146.90px;font-size:15px;color:#1f1f1f;">kullanılsın mı?</div>
<div class="a" style="left:984.5px;top:165.5px;width:116px;height:34px;border:3.6px solid #fdd43c;border-radius:6px"></div>
<div class="a" style="left:997.9px;top:175px;width:14.4px;height:14.4px;border-radius:50%;border:2px solid #1a73e8"></div>
<div class="a" style="left:1001.6px;top:178.7px;width:7px;height:7px;border-radius:50%;background:#1a73e8"></div>
<div class="t" style="left:1025.8px;top:177.08px;font-size:11.6px;color:#333;">İzin ver</div>
<div class="a" style="left:997.9px;top:203.8px;width:14.4px;height:14.4px;border-radius:50%;border:2px solid #555"></div>
<div class="t" style="left:1025.8px;top:205.68px;font-size:11.6px;color:#333;">Reddet</div>
<div class="a" style="left:997.9px;top:231.4px;width:14.4px;height:14.4px;border-radius:50%;border:2px solid #555"></div>
<div class="t" style="left:1025.8px;top:233.48px;font-size:11.6px;color:#333;">Geç</div>
<div class="a" style="left:997px;top:267px;width:113px;height:27.6px;background:#e5e5e5;border-radius:2px;"></div>
<div class="t" style="left:853.5px;width:400px;text-align:center;top:275.92px;font-size:12.5px;color:#222;">Yönet</div>
<div class="a" style="left:1175.4px;top:267px;width:112.6px;height:27.6px;background:#ffcc00;border-radius:2px;"></div>
<div class="t" style="left:1031.7px;width:400px;text-align:center;top:275.92px;font-size:12.5px;color:#222;">Bitti</div>
</body></html>
